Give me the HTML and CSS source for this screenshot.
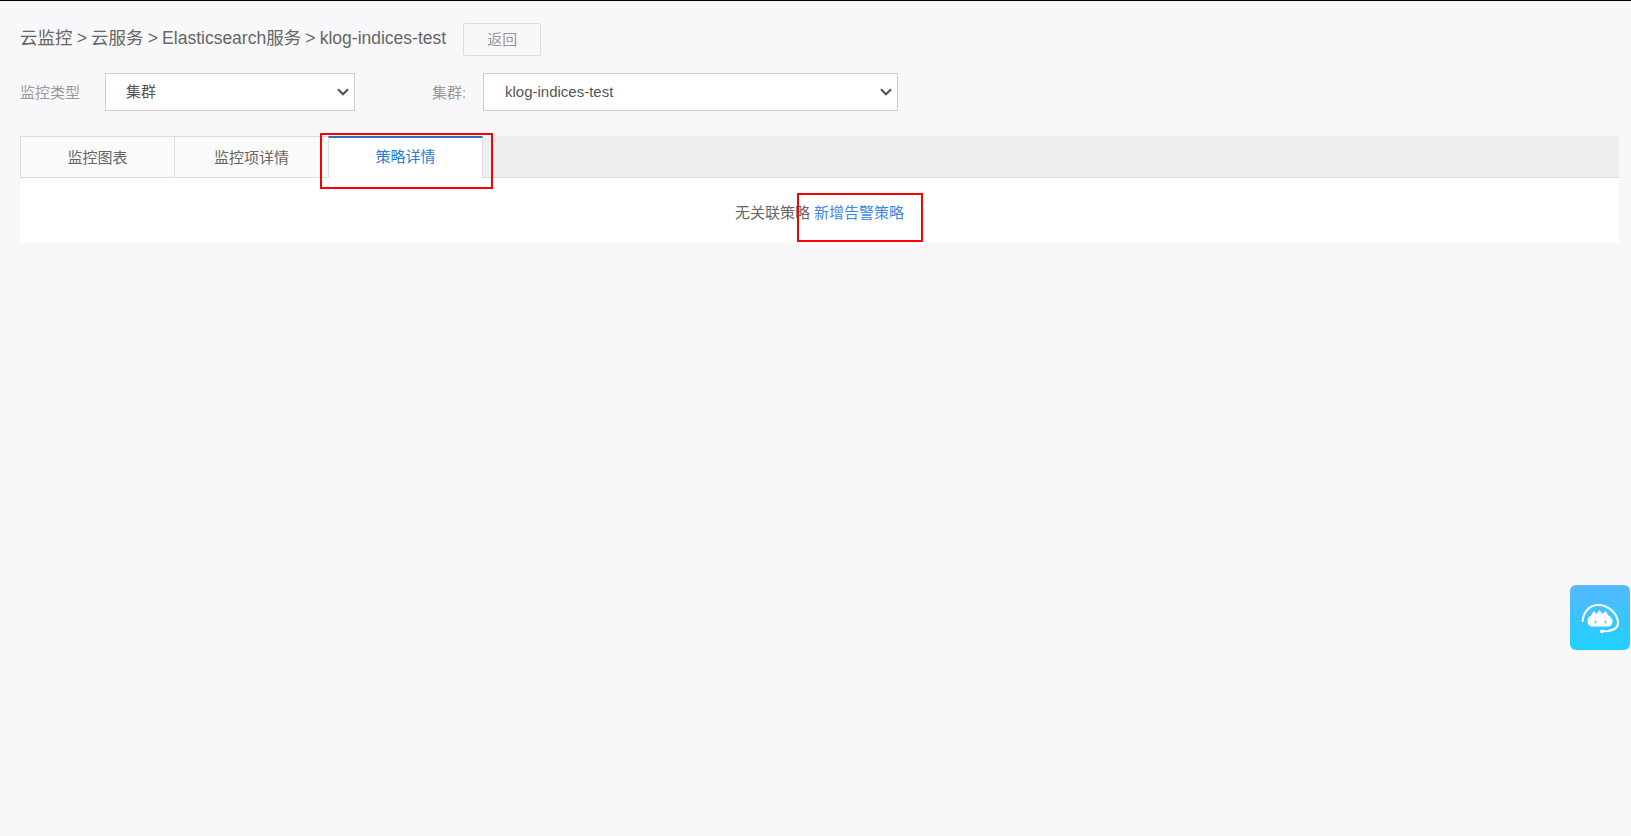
FILE: index.html
```html
<!DOCTYPE html>
<html lang="zh-CN">
<head>
<meta charset="utf-8">
<title>云监控</title>
<link rel="stylesheet" href="styles.css">
</head>
<body>
<main class="page">
  <header class="crumbs">
    <h1 class="crumb-text">云监控 &gt; 云服务 &gt; Elasticsearch服务 &gt; klog-indices-test</h1>
    <button class="back" type="button">返回</button>
  </header>
  <form class="filters">
    <label class="filter-label filter-label-type" for="type">监控类型</label>
    <select class="select select-type" id="type"><option>集群</option></select>
    <label class="filter-label filter-label-cluster" for="cluster">集群:</label>
    <select class="select select-cluster" id="cluster"><option>klog-indices-test</option></select>
  </form>
  <section class="panel">
    <nav class="tabs">
      <a class="tab">监控图表</a>
      <a class="tab">监控项详情</a>
      <a class="tab tab-active">策略详情</a>
    </nav>
    <div class="tab-body">
      <span>无关联策略</span>
      <a class="link">新增告警策略</a>
    </div>
    <div class="mark mark-tab"></div>
    <div class="mark mark-link"></div>
  </section>
</main>
<aside class="helper">
  <svg class="helper-icon" viewBox="0 0 60 65" width="60" height="65" aria-hidden="true">
    <path d="M12.5 36 C14 26 20 20 28 20 C38 20 47 28 48 37 C48.5 42 44 45 38 46 L33 46.3" fill="none" stroke="#fff" stroke-width="2" stroke-linecap="round"/>
    <circle cx="32" cy="46.3" r="1.9" fill="#fff"/>
    <path d="M17.5 36 C17.5 33 19.5 31 21 30.5 L24 26 L26.5 29 L29.5 25 L32.5 29 L35.5 26 L38.5 30.5 C41 31.5 42.5 34 42.5 36.5 C42.5 39.5 40.5 41.5 38 41.5 L22 41.5 C19.5 41.5 17.5 39 17.5 36 Z" fill="#fff"/>
    <ellipse cx="25.5" cy="37" rx="0.9" ry="1.6" fill="#45c0ff"/>
    <ellipse cx="35.5" cy="37" rx="0.9" ry="1.6" fill="#45c0ff"/>
  </svg>
</aside>
</body>
</html>
```
FILE: styles.css
```css
* { box-sizing: border-box; }
html, body { margin: 0; height: 100%; }
body {
  background: #f8f8fa;
  border-top: 1px solid #000;
  font-family: "Liberation Sans", "Noto Sans CJK SC", sans-serif;
  color: #666;
  overflow: hidden;
}
.page { padding: 22px 12px 0 20px; }
.crumbs { display: flex; align-items: center; height: 32px; }
.crumb-text { margin: 0 0 2px; font-size: 17.5px; word-spacing: -0.7px; font-weight: 400; color: #666; line-height: 30px; }
.back {
  margin-left: 17px;
  width: 78px;
  height: 33px;
  background: #f8f8fa;
  border: 1px solid #ddd;
  border-radius: 2px;
  color: #999;
  font: inherit;
  font-size: 15px;
  padding: 0 0 2px;
}
.filters { display: flex; align-items: center; margin-top: 18px; height: 38px; }
.filter-label { font-size: 15px; color: #999; padding-bottom: 2px; }
.filter-label-type { width: 85px; }
.filter-label-cluster { width: 51px; margin-left: 77px; }
.select {
  appearance: none;
  height: 38px;
  background: #fff url("data:image/svg+xml,%3Csvg xmlns='http://www.w3.org/2000/svg' width='12' height='8' viewBox='0 0 12 8'%3E%3Cpath d='M1 1.2 L6 6.2 L11 1.2' fill='none' stroke='%23555' stroke-width='2.2'/%3E%3C/svg%3E") no-repeat right 5px center;
  border: 1px solid #ccc;
  border-radius: 0;
  padding: 0 21px 1px 20px;
  font: inherit;
  font-size: 15px;
  color: #555;
  outline: none;
}
.select-cluster { padding-left: 21px; }
.select-type { width: 250px; }
.select-cluster { width: 415px; }
.panel { position: relative; margin-top: 25px; }
.tabs { display: flex; height: 42px; background: #efefef; border-bottom: 1px solid #ddd; }
.tab {
  display: flex;
  align-items: center;
  justify-content: center;
  width: 154px;
  height: 42px;
  padding-bottom: 2px;
  background: #fafafa;
  border: 1px solid #ddd;
  border-right: 0;
  font-size: 15px;
  color: #666;
}
.tab-active {
  width: 155px;
  background: #fff;
  color: #2a7ad6;
  border: 0;
  padding-bottom: 5px;
  border-top: 2px solid #2a72c8;
  border-right: 1px solid #ddd;
  border-left: 1px solid #ddd;
}
.tab-body {
  display: flex;
  justify-content: center;
  gap: 4px;
  height: 65px;
  padding-top: 25px;
  background: #fff;
  font-size: 15px;
  line-height: 20px;
  color: #666;
}
.link { color: #3b86e8; }
.mark { position: absolute; border: 2px solid #f00; pointer-events: none; }
.mark-tab { left: 300px; top: -3px; width: 173px; height: 56px; }
.mark-link { left: 777px; top: 57px; width: 126px; height: 49px; }
.helper {
  position: fixed;
  right: 1px;
  top: 585px;
  width: 60px;
  height: 65px;
  border-radius: 6px;
  background: linear-gradient(180deg, #55b8ff 0%, #1fd1ff 100%);
}
.helper-icon { display: block; }
```
